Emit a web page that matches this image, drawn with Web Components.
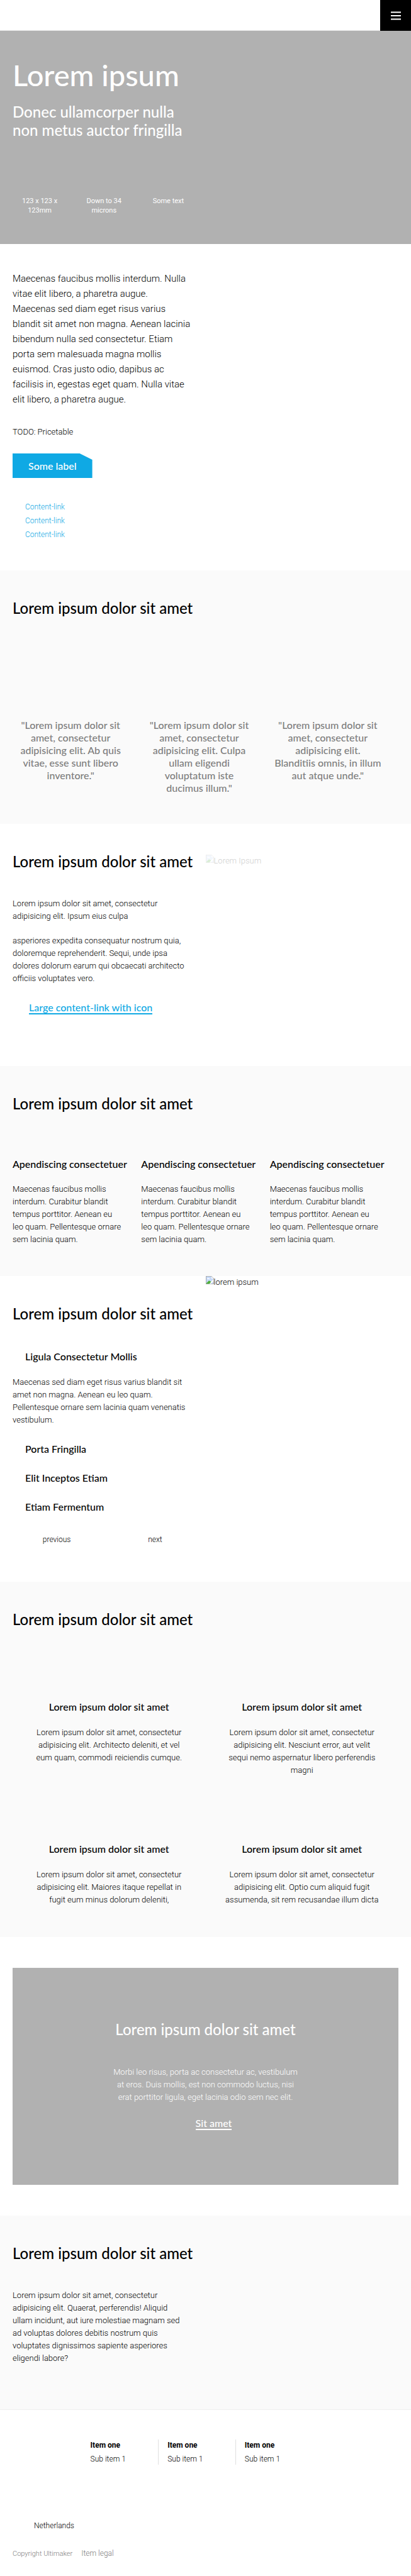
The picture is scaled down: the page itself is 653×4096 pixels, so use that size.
<!DOCTYPE html>
<html lang="en">
<head>
<meta charset="utf-8">
<meta name="viewport" content="width=device-width, initial-scale=1">
<title>Lorem ipsum</title>
<style>
  :root {
    --display: Lato, "Open Sans", sans-serif;
    --text: Roboto, "Liberation Sans", sans-serif;
    --blue: #0fa9e4;
    --grey: #b1b1b1;
    --gutter: 20px;
  }
  body { margin: 0; background: #fff; color: #000; font: 300 13px/20px var(--text); }
</style>
</head>
<body>
<site-header></site-header>
<main>
  <hero-banner>
    <span slot="title">Lorem ipsum</span>
    <span slot="subtitle">Donec ullamcorper nulla<br>non metus auctor fringilla</span>
    <span slot="usp1">123 x 123 x<br>123mm</span>
    <span slot="usp2">Down to 34<br>microns</span>
    <span slot="usp3">Some text</span>
  </hero-banner>

  <product-intro>
    Maecenas faucibus mollis interdum. Nulla<br>vitae elit libero, a pharetra augue.<br>Maecenas sed diam eget risus varius<br>blandit sit amet non magna. Aenean lacinia<br>bibendum nulla sed consectetur. Etiam<br>porta sem malesuada magna mollis<br>euismod. Cras justo odio, dapibus ac<br>facilisis in, egestas eget quam. Nulla vitae<br>elit libero, a pharetra augue.
    <span slot="price">TODO: Pricetable</span>
    <span slot="action">Some label</span>
    <content-link slot="links">Content-link</content-link>
    <content-link slot="links">Content-link</content-link>
    <content-link slot="links">Content-link</content-link>
  </product-intro>

  <page-section tone="muted" style="--gap:162px;--end:47px">
    <column-grid>
      <quote-item>"Lorem ipsum dolor sit<br>amet, consectetur<br>adipisicing elit. Ab quis<br>vitae, esse sunt libero<br>inventore."</quote-item>
      <quote-item>"Lorem ipsum dolor sit<br>amet, consectetur<br>adipisicing elit. Culpa<br>ullam eligendi<br>voluptatum iste<br>ducimus illum."</quote-item>
      <quote-item>"Lorem ipsum dolor sit<br>amet, consectetur<br>adipisicing elit.<br>Blanditiis omnis, in illum<br>aut atque unde."</quote-item>
    </column-grid>
  </page-section>

  <page-section style="--gap:43px;--end:83px;--media-top:49px">
    <broken-image slot="media" faded>Lorem Ipsum</broken-image>
    <text-block>Lorem ipsum dolor sit amet, consectetur<br>adipisicing elit. Ipsum eius culpa</text-block>
    <text-block style="--before:19px">asperiores expedita consequatur nostrum quia,<br>doloremque reprehenderit. Sequi, unde ipsa<br>dolores dolorum earum qui obcaecati architecto<br>officiis voluptates vero.</text-block>
    <large-link style="--before:26px">Large content-link with icon</large-link>
  </page-section>

  <page-section tone="muted" style="--gap:72px;--end:48px">
    <column-grid>
      <text-column>
        <span slot="title">Apendiscing consectetuer</span>
        Maecenas faucibus mollis<br>interdum. Curabitur blandit<br>tempus porttitor. Aenean eu<br>leo quam. Pellentesque ornare<br>sem lacinia quam.
      </text-column>
      <text-column>
        <span slot="title">Apendiscing consectetuer</span>
        Maecenas faucibus mollis<br>interdum. Curabitur blandit<br>tempus porttitor. Aenean eu<br>leo quam. Pellentesque ornare<br>sem lacinia quam.
      </text-column>
      <text-column>
        <span slot="title">Apendiscing consectetuer</span>
        Maecenas faucibus mollis<br>interdum. Curabitur blandit<br>tempus porttitor. Aenean eu<br>leo quam. Pellentesque ornare<br>sem lacinia quam.
      </text-column>
    </column-grid>
  </page-section>

  <page-section style="--gap:44px;--end:57px;--media-top:0px">
    <broken-image slot="media">lorem ipsum</broken-image>
    <accordion-item open>
      <span slot="title">Ligula Consectetur Mollis</span>
      Maecenas sed diam eget risus varius blandit sit<br>amet non magna. Aenean eu leo quam.<br>Pellentesque ornare sem lacinia quam venenatis<br>vestibulum.
    </accordion-item>
    <accordion-item><span slot="title">Porta Fringilla</span></accordion-item>
    <accordion-item><span slot="title">Elit Inceptos Etiam</span></accordion-item>
    <accordion-item><span slot="title">Etiam Fermentum</span></accordion-item>
    <slide-nav></slide-nav>
  </page-section>

  <page-section tone="muted" style="--gap:115px;--end:49px">
    <column-grid pair>
      <feature-card>Lorem ipsum dolor sit amet, consectetur<br>adipisicing elit. Architecto deleniti, et vel<br>eum quam, commodi reiciendis cumque.</feature-card>
      <feature-card>Lorem ipsum dolor sit amet, consectetur<br>adipisicing elit. Nesciunt error, aut velit<br>sequi nemo aspernatur libero perferendis<br>magni</feature-card>
      <feature-card>Lorem ipsum dolor sit amet, consectetur<br>adipisicing elit. Maiores itaque repellat in<br>fugit eum minus dolorum deleniti,</feature-card>
      <feature-card>Lorem ipsum dolor sit amet, consectetur<br>adipisicing elit. Optio cum aliquid fugit<br>assumenda, sit rem recusandae illum dicta</feature-card>
    </column-grid>
  </page-section>

  <call-to-action>
    <span slot="title">Lorem ipsum dolor sit amet</span>
    Morbi leo risus, porta ac consectetur ac, vestibulum<br>at eros. Duis mollis, est non commodo luctus, nisi<br>erat porttitor ligula, eget lacinia odio sem nec elit.
    <large-link slot="link">Sit amet</large-link>
  </call-to-action>

  <page-section tone="muted" style="--gap:43px;--end:72px">
    <text-block>Lorem ipsum dolor sit amet, consectetur<br>adipisicing elit. Quaerat, perferendis! Aliquid<br>ullam incidunt, aut iure molestiae magnam sed<br>ad voluptas dolores debitis nostrum quis<br>voluptates dignissimos sapiente asperiores<br>eligendi labore?</text-block>
  </page-section>
</main>
<site-footer></site-footer>

<script>
  const base = `*, *::before { box-sizing: border-box; }
    h1, h2, h3, p, ul, blockquote { margin: 0; padding: 0; list-style: none; }
    button { border: 0; padding: 0; background: none; color: inherit; font: inherit; text-align: inherit; cursor: pointer; }
    a { color: inherit; text-decoration: none; }`;

  function element(name, css, html) {
    const template = document.createElement('template');
    template.innerHTML = `<style>${base}${css}</style>${html}`;
    customElements.define(name, class extends HTMLElement {
      constructor() {
        super();
        this.attachShadow({ mode: 'open' }).append(template.content.cloneNode(true));
      }
    });
  }

  element('site-header', `
    :host { display: block; }
    header { display: flex; justify-content: flex-end; box-shadow: inset 0 -1px #e6e6e6; }
    button { display: grid; place-items: center; width: 49px; height: 49px; background: #000; }
    svg { display: block; }`,
    `<header><button aria-label="Menu"><svg width="16" height="14" viewBox="0 0 16 14" stroke="#fff" stroke-width="2"><path d="M0 1.500h16M0 7h16M0 12.500h16"/></svg></button></header>`);

  element('hero-banner', `
    :host { display: block; padding: 40px var(--gutter) 46px; background: var(--grey); color: #fff; }
    h1 { font: 500 47px/60px var(--display); }
    p { margin-top: 14px; font: 500 24px/29px var(--display); }
    ul { display: grid; grid-template-columns: repeat(3, 1fr); width: 50%; margin: 91px 0 0 -8px; font-size: 11px; line-height: 15px; text-align: center; font-weight: 400; }`,
    `<h1><slot name="title"></slot></h1><p><slot name="subtitle"></slot></p>
     <ul><li><slot name="usp1"></slot></li><li><slot name="usp2"></slot></li><li><slot name="usp3"></slot></li></ul>`);

  element('product-intro', `
    :host { display: block; padding: 43px var(--gutter) 46px; }
    .lead { font-size: 15px; line-height: 24px; }
    .price { margin-top: 30px; }
    button { margin-top: 24px; height: 39px; padding: 0 25px; background: var(--blue); color: #fff; font: 500 16px/39px var(--display);
      clip-path: polygon(0 0, calc(100% - 20px) 0, 100% 10px, 100% 100%, 0 100%); display: block; }
    .links { margin: 35px 0 0 var(--gutter); }`,
    `<p class="lead"><slot></slot></p><p class="price"><slot name="price"></slot></p>
     <button><slot name="action"></slot></button><div class="links"><slot name="links"></slot></div>`);

  element('content-link', `
    :host { display: block; color: var(--blue); font-size: 12px; line-height: 22px; }`,
    `<a href="#"><slot></slot></a>`);

  element('page-section', `
    :host { display: grid; grid-template-columns: 1fr 1fr; padding: 0 var(--gutter) var(--end); }
    :host([tone="muted"]) { background: #fafafa; }
    .main { grid-area: 1 / 1 / 2 / 3; padding-top: 45px; }
    .media { grid-area: 1 / 2; justify-self: start; padding-top: var(--media-top, 0px); }
    h2 { margin-bottom: var(--gap); font: 500 24px/29px var(--display); }`,
    `<div class="main"><h2>Lorem ipsum dolor sit amet</h2><slot></slot></div><div class="media"><slot name="media"></slot></div>`);

  element('column-grid', `
    :host { display: grid; grid-template-columns: repeat(3, 1fr); }
    :host([pair]) { grid-template-columns: 1fr 1fr; row-gap: 105px; }`,
    `<slot></slot>`);

  element('quote-item', `
    :host { display: block; padding-right: var(--gutter); color: #7d7d7d; font: 500 16px/20px var(--display); text-align: center; white-space: nowrap; }`,
    `<blockquote><slot></slot></blockquote>`);

  element('text-block', `
    :host { display: block; margin-top: var(--before, 0px); }`,
    `<p><slot></slot></p>`);

  element('large-link', `
    :host { display: block; margin-top: var(--before, 0px); padding-left: 26px; color: var(--blue); font: 500 16px/20px var(--display); }
    a { display: inline-block; box-shadow: 0 2px currentColor; line-height: 19px; }`,
    `<a href="#"><slot></slot></a>`);

  element('broken-image', `
    :host { display: flex; line-height: 20px; }
    :host([faded]) { opacity: .2; }
    svg { display: block; flex: none; }`,
    `<svg width="13" height="13" viewBox="0 0 16 16"><path d="M0 0h11l5 5v11H0z" fill="#a3a3a3"/><path d="M1 1h10v4h4v10H1z" fill="#c6d9f8"/><path d="M11 1l4 4h-4z" fill="#fff"/><path d="M3 6a1.500 1.500 0 0 1 3-1 1.300 1.300 0 0 1 2 1z" fill="#fff"/><path d="M1 15v-1l5-5 3 1 2 2-3 3z" fill="#4faf38"/><path d="M15 6l-8 9h3l5-5z" fill="#fff"/></svg><span><slot></slot></span>`);

  element('text-column', `
    :host { display: block; padding-right: var(--gutter); white-space: nowrap; }
    h3 { margin-bottom: 20px; font: 500 16px/20px var(--display); }`,
    `<h3><slot name="title"></slot></h3><p><slot></slot></p>`);

  element('accordion-item', `
    :host { display: block; margin-bottom: 26px; }
    h3 { padding-left: var(--gutter); font: 500 16px/20px var(--display); }
    p { display: none; padding-top: 21px; }
    button { display: block; }
    :host([open]) p { display: block; }`,
    `<h3><button><slot name="title"></slot></button></h3><p><slot></slot></p>`);

  element('slide-nav', `
    :host { display: grid; grid-template-columns: 1fr 1fr; width: 51%; margin: 32px 0 0 -8px; font-size: 12px; line-height: 20px; }
    button { text-align: center; }`,
    `<button>previous</button><button>next</button>`);

  element('feature-card', `
    :host { display: block; text-align: center; white-space: nowrap; }
    h3 { margin-bottom: 21px; font: 500 16px/20px var(--display); }`,
    `<h3>Lorem ipsum dolor sit amet</h3><p><slot></slot></p>`);

  element('call-to-action', `
    :host { display: block; padding: 49px var(--gutter); }
    section { padding: 83px 0 88px; background: var(--grey); color: #fff; text-align: center; --blue: #fff; }
    h2 { margin-bottom: 44px; font: 500 24px/29px var(--display); }
    p { margin-bottom: 21px; }
    ::slotted(large-link) { --blue: #fff; }`,
    `<section><h2><slot name="title"></slot></h2><p><slot></slot></p><slot name="link"></slot></section>`);

  element('site-footer', `
    :host { display: block; padding: 47px var(--gutter) 27px; border-top: 1px solid #efefef; margin-top: -1px; font-size: 12px; line-height: 18px; }
    nav { display: grid; grid-template-columns: repeat(5, 1fr); margin: 0 14px 0 -14px; }
    ul { display: grid; gap: 4px; padding-left: 14px; border-left: 1px solid #e0e0e0; }
    ul:first-child { grid-column: 2; border-color: transparent; }
    b { font-weight: 700; }
    .country { display: block; margin: 88px 0 26px 34px; }
    .legal { display: flex; gap: 14px; align-items: baseline; color: #7d7d7d; }
    small { font-size: 11px; }`,
    `<footer><nav>
      <ul><li><a href="#"><b>Item one</b></a></li><li><a href="#">Sub item 1</a></li></ul>
      <ul><li><a href="#"><b>Item one</b></a></li><li><a href="#">Sub item 1</a></li></ul>
      <ul><li><a href="#"><b>Item one</b></a></li><li><a href="#">Sub item 1</a></li></ul></nav>
      <button class="country">Netherlands</button>
      <div class="legal"><small>Copyright Ultimaker</small><a href="#">Item legal</a></div></footer>`);
</script>
</body>
</html>
